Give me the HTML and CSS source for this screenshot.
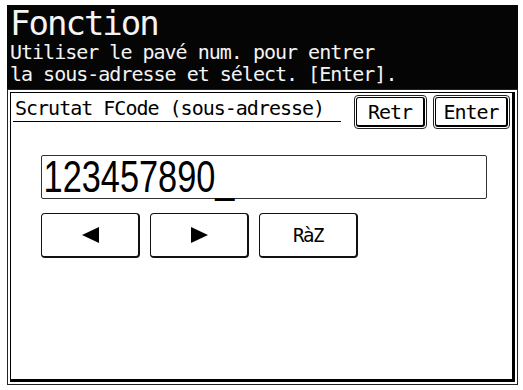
FILE: index.html
```html
<!DOCTYPE html>
<html lang="fr">
<head>
<meta charset="utf-8">
<title>Fonction</title>
<link rel="stylesheet" href="styles.css">
</head>
<body>
<div class="screen">
  <div class="header">
    <div class="title">Fonction</div>
    <div class="subtitle">Utiliser le pavé num. pour entrer</div>
    <div class="subtitle">la sous-adresse et sélect. [Enter].</div>
  </div>
  <div class="panel">
    <div class="panel-inner">
      <div class="toprow">
        <div class="label">Scrutat FCode (sous-adresse)</div>
        <div class="tbtn retr"><div class="tbtn-in">Retr</div></div>
        <div class="tbtn enter"><div class="tbtn-in">Enter</div></div>
      </div>
      <div class="field"><span class="digits">123457890_</span></div>
      <div class="keys">
        <div class="key"><svg width="17" height="16" viewBox="0 0 17 16"><polygon points="0,8 17,0 17,16" fill="#000"/></svg></div>
        <div class="key"><svg width="17" height="16" viewBox="0 0 17 16"><polygon points="17,8 0,0 0,16" fill="#000"/></svg></div>
        <div class="key key-text">RàZ</div>
      </div>
    </div>
  </div>
</div>
</body>
</html>
```
FILE: styles.css
```css
html, body {
  margin: 0;
  padding: 0;
  background: #fff;
}
body {
  width: 523px;
  height: 390px;
  overflow: hidden;
  font-family: "DejaVu Sans Mono", monospace;
  color: #000;
}
.screen {
  padding: 5px 5px 0 7px;
}
.header {
  background: #050505;
  color: #f4f4f4;
  height: 84px;
  padding: 0 0 0 3px;
  box-sizing: border-box;
}
.title {
  font-size: 34px;
  line-height: 36px;
  letter-spacing: -2px;
}
.subtitle {
  font-size: 20px;
  line-height: 22px;
  letter-spacing: -1px;
  white-space: pre;
}
.panel {
  border: 1px solid #222;
  padding: 2px;
  height: 290px;
}
.panel-inner {
  border: 1px solid #000;
  border-right-width: 3px;
  border-bottom-width: 3px;
  height: 290px;
  box-sizing: border-box;
}
.toprow {
  display: flex;
  align-items: flex-start;
  padding: 2px 0 0 2px;
}
.label {
  width: 326px;
  height: 26px;
  border-bottom: 1px solid #000;
  padding-left: 2px;
  font-size: 20px;
  line-height: 26px;
  letter-spacing: -1px;
  white-space: pre;
}
.tbtn {
  border: 1px solid #222;
  border-radius: 4px;
  padding: 1px;
  height: 34px;
  box-sizing: border-box;
}
.retr {
  width: 73px;
  margin-left: 13px;
}
.enter {
  width: 77px;
  margin-left: 6px;
}
.tbtn-in {
  height: 100%;
  box-sizing: border-box;
  border: 1px solid #000;
  border-right-width: 2px;
  border-bottom-width: 2px;
  border-radius: 3px;
  font-size: 20px;
  line-height: 28px;
  letter-spacing: -1px;
  text-align: center;
}
.field {
  margin: 26px 0 0 30px;
  width: 446px;
  height: 44px;
  box-sizing: border-box;
  border: 1px solid #333;
  border-radius: 2px;
}
.digits {
  display: inline-block;
  font-family: "Liberation Sans", Arial, sans-serif;
  font-size: 44px;
  line-height: 42px;
  padding-left: 2px;
  transform: scaleX(0.78);
  transform-origin: left center;
  white-space: pre;
}
.keys {
  display: flex;
  gap: 10px;
  margin: 14px 0 0 30px;
}
.key {
  width: 99px;
  height: 45px;
  box-sizing: border-box;
  border: 1px solid #111;
  border-right-width: 2px;
  border-bottom-width: 2px;
  border-radius: 4px;
  display: flex;
  align-items: center;
  justify-content: center;
}
.key-text {
  font-size: 19px;
  letter-spacing: -1.5px;
}
```
